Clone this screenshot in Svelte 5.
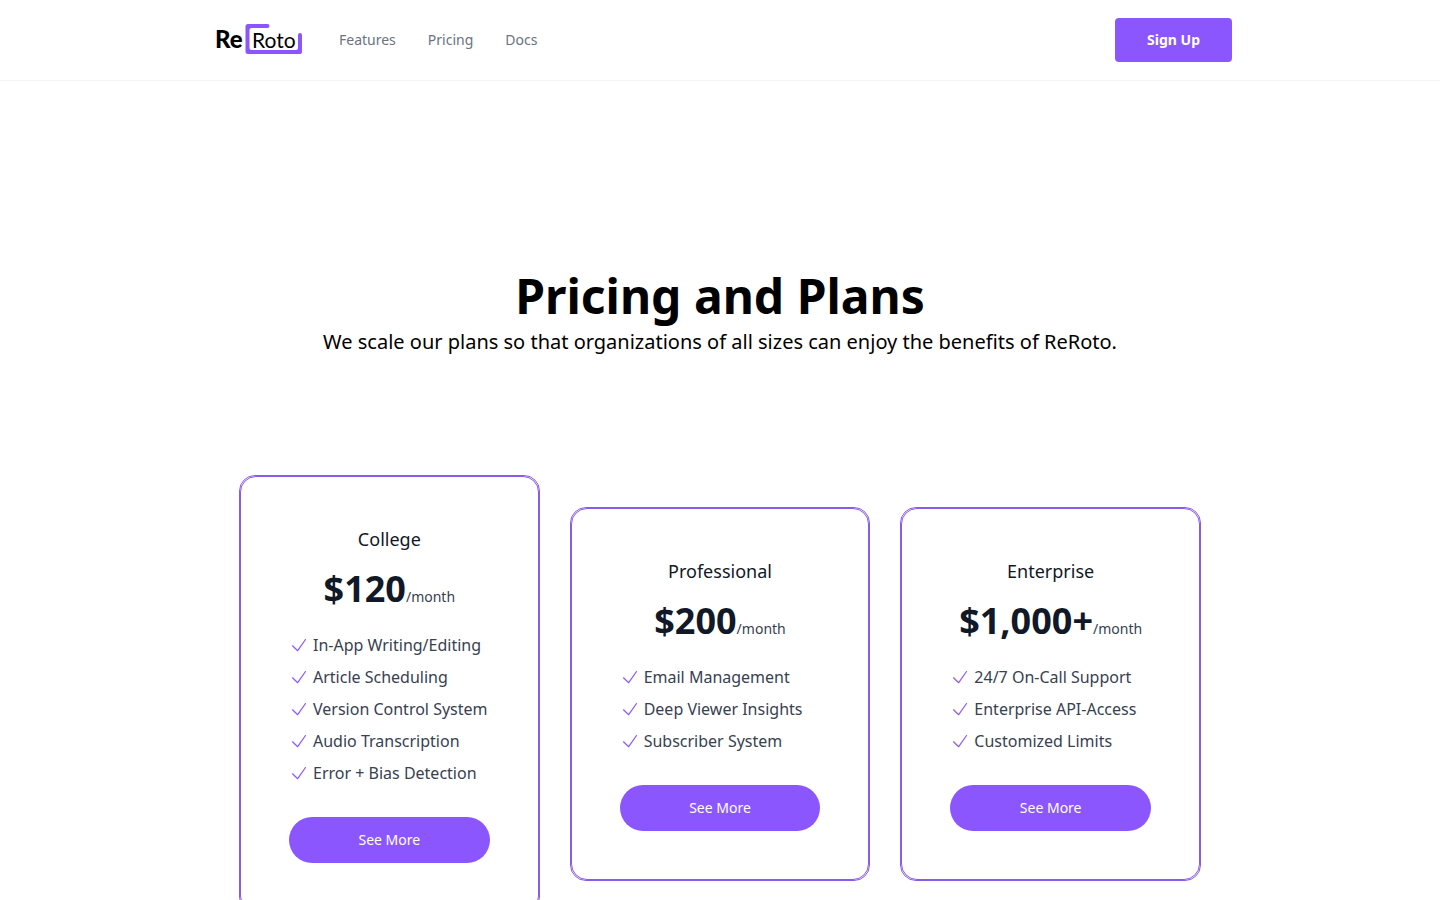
<script>
    const links = ['Features', 'Pricing', 'Docs'];

    let plans = [
        {
            name: 'College',
            price: '$120',
            features: [
                'In-App Writing/Editing',
                'Article Scheduling',
                'Version Control System',
                'Audio Transcription',
                'Error + Bias Detection'
            ]
        },
        {
            name: 'Professional',
            price: '$200',
            features: ['Email Management', 'Deep Viewer Insights', 'Subscriber System']
        },
        {
            name: 'Enterprise',
            price: '$1,000+',
            features: ['24/7 On-Call Support', 'Enterprise API-Access', 'Customized Limits']
        }
    ];
</script>

<header>
    <div class="bar">
        <a class="logo" href="#home" aria-label="ReRoto">
            <svg width="92" height="36" viewBox="0 0 92 36">
                <path d="M52.500 2H33Q30.500 2 30.500 4.500V29.500Q30.500 32 33 32H85Q87 32 87 30V13Q87 11 85 11Q83 11 83 13V26Q83 28 81 28H36.500Q34.500 28 34.500 26V8Q34.500 6 36.500 6H52.500Q54.500 6 54.500 4Q54.500 2 52.500 2Z" fill="#8c56ff" />
                <text class="re" x="0" y="26">Re</text>
                <text class="roto" x="37" y="26">Roto</text>
            </svg>
        </a>
        <nav>
            {#each links as link}
                <a href="#{link.toLowerCase()}">{link}</a>
            {/each}
        </nav>
        <button class="signup">Sign Up</button>
    </div>
</header>

<main>
    <div class="intro">
        <h1>Pricing and Plans</h1>
        <p>We scale our plans so that organizations of all sizes can enjoy the benefits of ReRoto.</p>
    </div>

    <div class="plans">
        {#each plans as plan}
            <section class="card">
                <div class="inner">
                    <h2>{plan.name}</h2>
                    <div class="price"><strong>{plan.price}</strong><span>/month</span></div>
                    <ul>
                        {#each plan.features as feature}
                            <li>
                                <svg width="20" height="20" viewBox="0 0 20 20" aria-hidden="true">
                                    <path d="M3.500 10.800L8.700 15.700L16.500 4.500" fill="none" stroke="#8c56ff" stroke-width="1.200" stroke-linecap="round" stroke-linejoin="round" />
                                </svg>
                                {feature}
                            </li>
                        {/each}
                    </ul>
                    <button class="more">See More</button>
                </div>
            </section>
        {/each}
    </div>
</main>

<style>
    :global(body) {
        margin: 0;
        background: #fff;
        color: #000;
        font-family: 'Noto Sans', sans-serif;
        font-size: 16px;
        line-height: 24px;
    }
    :global(html) {
        scrollbar-width: none;
    }
    header {
        border-bottom: 1px solid #f3f4f6;
    }
    .bar {
        display: flex;
        align-items: center;
        box-sizing: border-box;
        max-width: 1024px;
        height: 80px;
        margin: 0 auto;
        padding-left: 7px;
    }
    .logo {
        display: flex;
    }
    .re {
        font: 900 24px Lato, sans-serif;
    }
    .roto {
        font: 400 21px Lato, sans-serif;
    }
    nav {
        display: flex;
        gap: 32px;
        margin: 0 auto 0 32px;
    }
    nav a {
        color: #6b7280;
        font-size: 14px;
        text-decoration: none;
    }
    button {
        border: 0;
        background: #8c56ff;
        color: #fff;
        font-family: inherit;
        font-size: 14px;
        cursor: pointer;
    }
    .signup {
        padding: 12px 32px;
        border-radius: 4px;
        font-weight: bold;
        line-height: 20px;
    }
    main {
        padding: 191px 24px 96px;
    }
    .intro {
        text-align: center;
    }
    h1 {
        margin: 0;
        font-size: 48px;
        font-weight: bold;
        line-height: 48px;
    }
    .intro p {
        margin: 8px 0 0;
        font-size: 20px;
        line-height: 28px;
    }
    .plans {
        display: grid;
        grid-template-columns: repeat(auto-fit, minmax(280px, 1fr));
        align-items: center;
        gap: 30px;
        max-width: 962px;
        margin: 119px auto 0;
    }
    /* two outlines with the same radius leave a thin gap at the corners */
    .card,
    .inner {
        border: 1px solid #8a5be8;
        border-radius: 16px;
    }
    .inner {
        padding: 48px;
    }
    h2 {
        margin: 0;
        color: #111827;
        font-size: 18px;
        font-weight: normal;
        line-height: 28px;
        text-align: center;
    }
    .price {
        display: flex;
        align-items: baseline;
        justify-content: center;
        margin: 16px 0 24px;
    }
    .price strong {
        color: #111827;
        font-size: 36px;
        line-height: 40px;
    }
    .price span {
        color: #374151;
        font-size: 14px;
        line-height: 20px;
    }
    ul {
        display: grid;
        gap: 8px;
        margin: 0 0 32px;
        padding: 0;
        list-style: none;
    }
    li {
        display: flex;
        align-items: center;
        gap: 4px;
        color: #374151;
        white-space: nowrap;
    }
    .more {
        display: block;
        width: 100%;
        padding: 13px 24px;
        border-radius: 24px;
        line-height: 20px;
    }
</style>
